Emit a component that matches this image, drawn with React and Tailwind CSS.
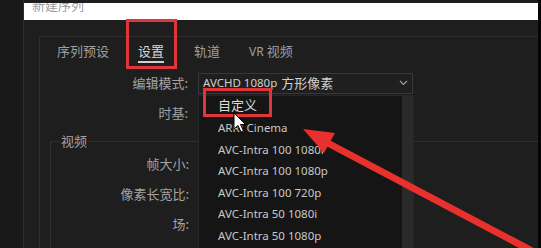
import React from "react";

const cjk = { fontFamily: '"Noto Sans CJK SC", "Noto Sans", sans-serif' };
const latin = { fontFamily: '"Noto Sans", "Noto Sans CJK SC", sans-serif' };

function Row({ label, children, w }) {
  return (
    <div className="flex items-center h-[30px]">
      <div className={`${w} shrink-0 text-right text-[13px] text-[#a3a3a3] pr-[10px]`} style={cjk}>
        {label}
      </div>
      {children}
    </div>
  );
}

export default function App() {
  const items = [
    "ARRI Cinema",
    "AVC-Intra 100 1080i",
    "AVC-Intra 100 1080p",
    "AVC-Intra 100 720p",
    "AVC-Intra 50 1080i",
    "AVC-Intra 50 1080p",
  ];
  return (
    <div className="relative w-[541px] h-[248px] overflow-hidden bg-[#1e1e1e] flex">
      <div className="w-[24px] h-full bg-[#191919] border-r border-[#2e2e2e] shrink-0" />
      <div className="flex-1 flex flex-col min-w-0">
        <div className="h-[3px]" />
        <div className="h-[17px] bg-white overflow-hidden pl-[8px]">
          <div className="text-[13px] leading-[14px] -mt-[5px] text-[#9c9c9c]" style={cjk}>
            新建序列
          </div>
        </div>
        <div className="flex-1 pl-[15px] pt-[16px]">
          <div className="h-full border-l border-t border-[#2e2e2e] flex flex-col">
            <div className="h-[28px] flex items-start pl-[17px] pt-[4px] text-[13px] text-[#9f9f9f]" style={cjk}>
              <div className="h-[20px] leading-[20px]">序列预设</div>
              <div className="ml-[29px] flex flex-col items-center">
                <div className="h-[20px] leading-[20px] text-[#d6d6d6]">设置</div>
                <div className="w-[26px] h-[2px] bg-[#cfcfcf]" />
              </div>
              <div className="ml-[30px] h-[20px] leading-[20px]">轨道</div>
              <div className="ml-[29px] h-[20px] leading-[20px]">
                <span style={latin} className="text-[12px]">VR</span> 视频
              </div>
            </div>
            <div className="mt-[3px]">
              <Row label="编辑模式:" w="w-[158px]">
                <div className="w-[215px] h-[21px] border border-[#383838] bg-[#1f1f1f] flex items-center pl-[4px] pr-[4px] text-[13px] text-[#cfcfcf]">
                  <span style={latin} className="text-[11.5px]">AVCHD 1080p</span>
                  <span style={cjk} className="ml-[4px]">方形像素</span>
                  <svg className="ml-auto" width="9" height="6" viewBox="0 0 9 6">
                    <path d="M1 1 L4.5 4.5 L8 1" stroke="#a0a0a0" strokeWidth="1.2" fill="none" />
                  </svg>
                </div>
              </Row>
              <Row label="时基:" w="w-[158px]" />
            </div>
            <div className="mt-[13px] ml-[10px] flex-1 border-l border-t border-[#2e2e2e] flex flex-col">
              <div className="-mt-[10px] ml-[9px] w-fit px-[1px] bg-[#1e1e1e] text-[13px] leading-[18px] text-[#a3a3a3]" style={cjk}>
                视频
              </div>
              <div className="-mt-[1px]">
                <Row label="帧大小:" w="w-[148px]" />
                <Row label="像素长宽比:" w="w-[148px]" />
                <Row label="场:" w="w-[148px]" />
              </div>
            </div>
          </div>
        </div>
      </div>
      <div className="w-[3px] h-full bg-[#050505] shrink-0" />

      {/* dropdown list overlay */}
      <div className="absolute left-[198px] top-[95px] w-[216px] h-[160px] bg-[#151515] border border-[#262626] flex">
        <div className="flex-1 pl-[19px]">
          <div className="h-[20px] leading-[20px] mt-[-1px] text-[13px] text-[#dcdcdc]" style={cjk}>
            自定义
          </div>
          {items.map((t, i) => (
            <div
              key={t}
              className={`h-[21.6px] leading-[21.6px] text-[11.5px] text-[#c8c8c8] ${i === 0 ? "mt-[2px]" : ""}`}
              style={latin}
            >
              {t}
            </div>
          ))}
        </div>
        <div className="w-[11px] h-full bg-[#2a2a2a]" />
      </div>

      {/* red highlight boxes */}
      <div className="absolute left-[126px] top-[19px] w-[51px] h-[50px] border-[3px] border-[#e0353a]" />
      <div className="absolute left-[203px] top-[88px] w-[69px] h-[29px] border-[3px] border-[#e0353a]" />

      {/* arrow + cursor */}
      <svg className="absolute left-0 top-0 pointer-events-none" width="541" height="248" viewBox="0 0 541 248">
        <line x1="534" y1="252" x2="322" y2="140" stroke="#e8302c" strokeWidth="7" />
        <polygon points="303,129 324,153 335,133" fill="#e8302c" />
        <path
          d="M234 113 L234 129 L238 125.5 L241 132 L243.5 131 L240.5 124.5 L245.5 124.5 Z"
          fill="#ffffff"
          stroke="#000000"
          strokeWidth="1"
        />
      </svg>
    </div>
  );
}
